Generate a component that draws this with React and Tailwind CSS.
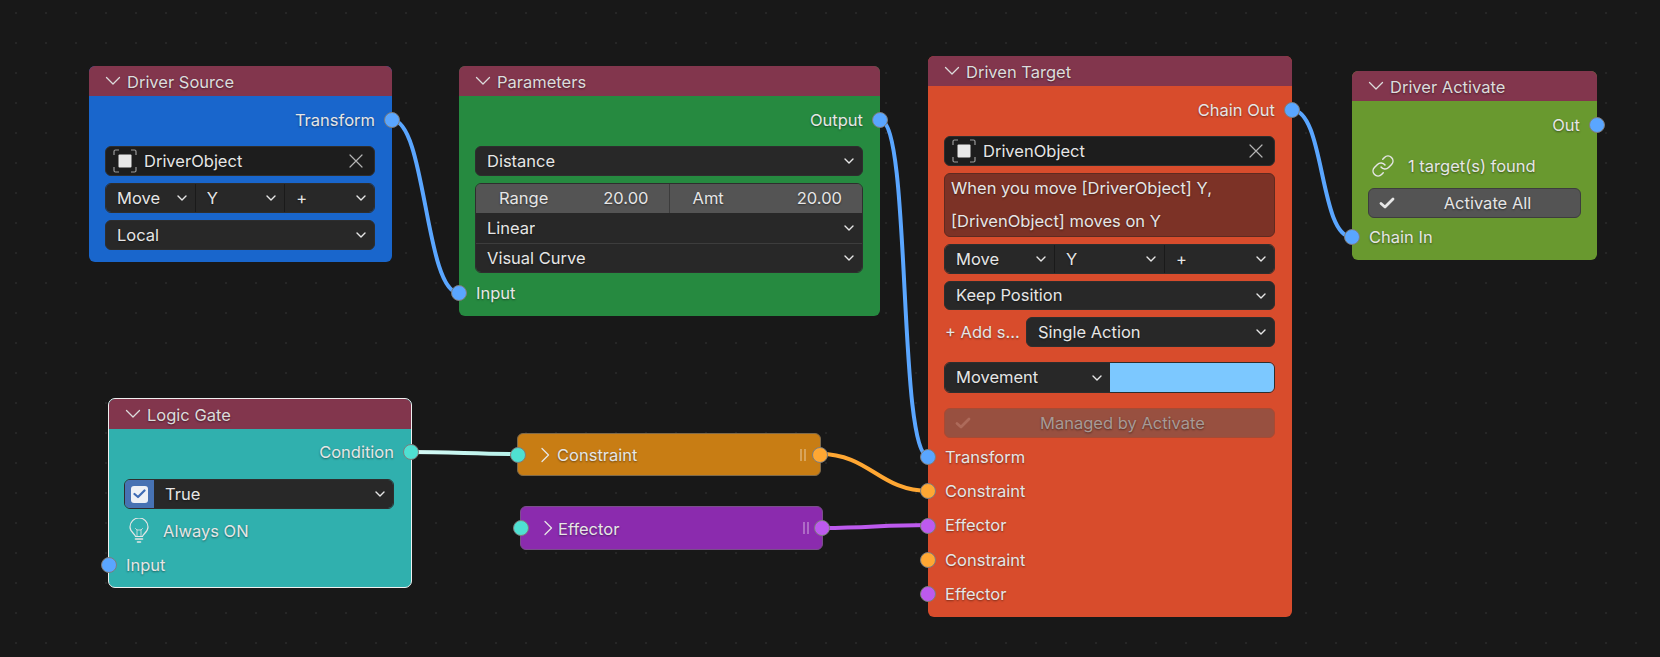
import { Link } from "lucide-react";

const FONT = "font-['Inter','Noto_Sans',sans-serif]";
const BOXED = "rounded-[6px] border border-[#2e2e2e]";

// Collapse arrow in node headers
function HeaderArrow({ open = true }) {
  return (
    <svg width="16" height="16" viewBox="0 0 16 16" fill="none" stroke="currentColor" strokeWidth="1.3" strokeLinecap="round" strokeLinejoin="round" className="shrink-0">
      {open ? <path d="M1.5 4.5l6.5 6.5 6.5-6.5" /> : <path d="M5 1.5l6.5 6.5-6.5 6.5" />}
    </svg>
  );
}

function Chevron() {
  return (
    <svg width="10" height="10" viewBox="0 0 10 10" fill="none" stroke="#e6e6e6" strokeWidth="1.4" strokeLinecap="round" strokeLinejoin="round" className="shrink-0">
      <path d="M1 3l4 4 4-4" />
    </svg>
  );
}

function ObjectIcon() {
  return (
    <svg width="24" height="24" viewBox="0 0 24 24" fill="none" className="shrink-0">
      <path d="M1 6V2.5A1.5 1.5 0 0 1 2.5 1H6M18 1h3.5A1.5 1.5 0 0 1 23 2.5V6M23 18v3.5a1.5 1.5 0 0 1-1.5 1.5H18M6 23H2.5A1.5 1.5 0 0 1 1 21.5V18" stroke="#9a9a9a" strokeWidth="1.2" />
      <rect x="5.5" y="5.5" width="13" height="13" rx="1" fill="#e8e8e8" />
    </svg>
  );
}

function CrossIcon() {
  return (
    <svg width="14" height="14" viewBox="0 0 14 14" stroke="#b4b4b4" strokeWidth="1.2" strokeLinecap="round" className="shrink-0">
      <path d="M1 1l12 12M13 1L1 13" />
    </svg>
  );
}

function BulbIcon() {
  return (
    <svg width="24" height="26" viewBox="0 0 24 26" fill="none" stroke="#e6e6e6" strokeWidth="1.2" strokeLinecap="round" strokeLinejoin="round" className="shrink-0">
      <path d="M8.5 18.5c-.3-2.6-5.5-4.4-5.5-9.5a9 9 0 0 1 18 0c0 5.1-5.2 6.9-5.5 9.5z" />
      <path d="M8.5 10.5l1.5 1.5h4l1.5-1.5M10 12v6M14 12v6" strokeWidth="0.8" />
      <path d="M8.5 21h7" strokeWidth="1.6" />
      <path d="M10.5 24h3" strokeWidth="1.6" />
    </svg>
  );
}

function Tick({ color = "#e6e6e6" }) {
  return (
    <svg width="16" height="12" viewBox="0 0 16 12" fill="none" stroke={color} strokeWidth="2.8" strokeLinecap="round" strokeLinejoin="round" className="shrink-0">
      <path d="M2 6.5l4 3.5 8-8" />
    </svg>
  );
}

function Grip() {
  return (
    <div className="flex gap-[2px] shrink-0">
      <span className="w-[2px] h-[12px] bg-white/30" />
      <span className="w-[2px] h-[12px] bg-white/30" />
    </div>
  );
}

function Socket({ color, side }) {
  return (
    <span
      className={`absolute top-1/2 -translate-y-1/2 w-[16px] h-[16px] rounded-full border border-[#7d7d7d] z-10 ${side === "left" ? "left-[-8px]" : "right-[-8px]"}`}
      style={{ backgroundColor: color }}
    />
  );
}

// A row holding a socket on the node edge and its label
function SocketRow({ label, color, side = "left", height = "h-[34px]" }) {
  return (
    <div className={`relative flex items-center px-[17px] ${height} ${side === "right" ? "justify-end" : ""}`}>
      <Socket color={color} side={side} />
      <span>{label}</span>
    </div>
  );
}

function Dropdown({ label, height = "h-[30px]", className = "" }) {
  return (
    <div className={`flex items-center justify-between pl-[11px] pr-[8px] bg-[#282828] ${height} ${className}`}>
      <span className="truncate">{label}</span>
      <Chevron />
    </div>
  );
}

function ObjectField({ name }) {
  return (
    <div className="flex items-center gap-[7px] h-[30px] pl-[7px] pr-[11px] rounded-[6px] bg-[#1d1d1d] border border-[#2e2e2e]">
      <ObjectIcon />
      <span className="flex-1">{name}</span>
      <CrossIcon />
    </div>
  );
}

function TripleRow() {
  return (
    <div className={`flex overflow-hidden ${BOXED}`}>
      <Dropdown label="Move" height="h-[28px]" className="flex-1" />
      <Dropdown label="Y" height="h-[28px]" className="flex-1 border-l border-[#1a1a1a]" />
      <Dropdown label="+" height="h-[28px]" className="flex-1 border-l border-[#1a1a1a]" />
    </div>
  );
}

function NodeHeader({ title }) {
  return (
    <div className="flex items-center gap-[6px] h-[30px] pl-[16px] bg-[#82364d] rounded-t-[6px] text-[#dcdcdc]">
      <HeaderArrow />
      <span className="pt-[2px]">{title}</span>
    </div>
  );
}

function Wires() {
  return (
    <svg width="1660" height="657" viewBox="0 0 1660 657" fill="none" className="absolute left-0 top-0">
      <defs>
        <linearGradient id="condition" x1="411" x2="518" y1="0" y2="0" gradientUnits="userSpaceOnUse">
          <stop offset="0" stopColor="#d6faf6" />
          <stop offset="1" stopColor="#b6f2ea" />
        </linearGradient>
      </defs>
      <g strokeWidth="4" strokeLinecap="round">
        <path d="M392 120C426 120 425 293 459 293" stroke="#5aa6ff" />
        <path d="M880 120C912 120 897 457 929 457" stroke="#5aa6ff" />
        <path d="M1292 110C1325 110 1319 237 1352 237" stroke="#5aa6ff" />
        <path d="M411 452C450 452 478 454 518 454" stroke="url(#condition)" />
        <path d="M820 454C870 454 879 491 929 491" stroke="#ffa733" />
        <path d="M823 528C870 528 880 525 929 525" stroke="#bd5aee" />
      </g>
    </svg>
  );
}

export default function App() {
  return (
    <div className={`relative w-[1660px] h-[657px] overflow-hidden bg-[#181818] bg-[radial-gradient(circle,#262626_1px,transparent_1.2px)] bg-[size:30px_30px] bg-[position:1px_-2px] text-[16.5px] text-[#e6e6e6] [text-shadow:0_1px_2px_rgba(0,0,0,0.45)] ${FONT}`}>
      <Wires />

      {/* Driver Source */}
      <div className="absolute left-[89px] top-[66px] w-[303px] h-[196px] rounded-[6px] bg-[#1966cc]">
        <NodeHeader title="Driver Source" />
        <div className="pt-[7px]">
          <SocketRow label="Transform" color="#5aa6ff" side="right" />
          <div className="flex flex-col gap-[7px] pt-[9px] pl-[16px] pr-[17px]">
            <ObjectField name="DriverObject" />
            <TripleRow />
            <Dropdown label="Local" className={BOXED} />
          </div>
        </div>
      </div>

      {/* Parameters */}
      <div className="absolute left-[459px] top-[66px] w-[421px] h-[250px] rounded-[6px] bg-[#268a40]">
        <NodeHeader title="Parameters" />
        <div className="pt-[7px]">
          <SocketRow label="Output" color="#5aa6ff" side="right" />
          <div className="flex flex-col gap-[7px] pt-[9px] pb-[3px] pl-[16px] pr-[17px]">
            <Dropdown label="Distance" className={BOXED} />
            <div className={`overflow-hidden ${BOXED}`}>
              <div className="flex h-[29px] bg-[#545454]">
                <div className="flex items-center justify-between flex-1 pl-[23px] pr-[20px]">
                  <span>Range</span>
                  <span>20.00</span>
                </div>
                <div className="flex items-center justify-between flex-1 pl-[23px] pr-[20px] border-l border-[#3c3c3c]">
                  <span>Amt</span>
                  <span>20.00</span>
                </div>
              </div>
              <Dropdown label="Linear" />
              <Dropdown label="Visual Curve" height="h-[29px]" className="border-t border-[#3d3d3d]" />
            </div>
          </div>
          <SocketRow label="Input" color="#5aa6ff" />
        </div>
      </div>

      {/* Driven Target */}
      <div className="absolute left-[928px] top-[56px] w-[364px] h-[561px] rounded-[6px] bg-[#d84c2c]">
        <NodeHeader title="Driven Target" />
        <div className="pt-[7px]">
          <SocketRow label="Chain Out" color="#5aa6ff" side="right" />
          <div className="flex flex-col gap-[7px] pt-[9px] pl-[16px] pr-[17px]">
            <ObjectField name="DrivenObject" />
            <div className="flex flex-col justify-center h-[64px] px-[6px] leading-[33px] rounded-[6px] bg-[#7c3226] border border-[#5f2a20]">
              <span>When you move [DriverObject] Y,</span>
              <span>[DrivenObject] moves on Y</span>
            </div>
            <TripleRow />
            <Dropdown label="Keep Position" height="h-[29px]" className={BOXED} />
            <div className="flex items-center">
              <span className="w-[82px] pl-[1px] shrink-0">+ Add s...</span>
              <Dropdown label="Single Action" className={`flex-1 ${BOXED}`} />
            </div>
          </div>
          <div className="flex flex-col gap-[15px] pt-[15px] pb-[2px] pl-[16px] pr-[17px]">
            <div className={`flex h-[31px] overflow-hidden ${BOXED}`}>
              <Dropdown label="Movement" height="h-full" className="w-[165px]" />
              <div className="flex-1 bg-[#7cc8ff]" />
            </div>
            <div className="flex items-center h-[30px] pl-[10px] rounded-[6px] bg-[#985040] border border-[#a84a33] text-[#a89a96]">
              <Tick color="#ad6a5a" />
              <span className="flex-1 text-center">Managed by Activate</span>
            </div>
          </div>
          <SocketRow label="Transform" color="#5aa6ff" height="h-[34.25px]" />
          <SocketRow label="Constraint" color="#ffa733" height="h-[34.25px]" />
          <SocketRow label="Effector" color="#bd5aee" height="h-[34.25px]" />
          <SocketRow label="Constraint" color="#ffa733" height="h-[34.25px]" />
          <SocketRow label="Effector" color="#bd5aee" height="h-[34.25px]" />
        </div>
      </div>

      {/* Driver Activate */}
      <div className="absolute left-[1352px] top-[71px] w-[245px] h-[189px] rounded-[6px] bg-[#69992f]">
        <NodeHeader title="Driver Activate" />
        <div className="pt-[7px]">
          <SocketRow label="Out" color="#5aa6ff" side="right" />
          <div className="flex flex-col gap-[7px] pt-[9px] pb-[2px] px-[16px]">
            <div className="flex items-center gap-[13px] h-[30px] pl-[3px]">
              <Link size={24} strokeWidth={1.5} className="shrink-0" />
              <span>1 target(s) found</span>
            </div>
            <div className="flex items-center h-[30px] pl-[10px] rounded-[6px] bg-[#545454] border border-[#3d3d3d]">
              <Tick />
              <span className="flex-1 text-center">Activate All</span>
            </div>
          </div>
          <SocketRow label="Chain In" color="#5aa6ff" />
        </div>
      </div>

      {/* Logic Gate */}
      <div className="absolute left-[108px] top-[398px] w-[304px] h-[190px] rounded-[7px] bg-[#30b0ae] border border-[#f0f0f0]">
        <NodeHeader title="Logic Gate" />
        <div className="pt-[6px]">
          <SocketRow label="Condition" color="#4fe0d2" side="right" />
          <div className="flex flex-col gap-[7px] pt-[10px] pb-[2px] pl-[15px] pr-[17px]">
            <div className={`flex h-[30px] overflow-hidden ${BOXED}`}>
              <div className="flex items-center justify-center w-[29px] bg-[#4772b3]">
                <div className="flex items-center justify-center w-[17px] h-[17px] rounded-[3px] bg-[#eef1f6]">
                  <svg width="13" height="10" viewBox="0 0 13 10" fill="none" stroke="#3f6cb5" strokeWidth="2.2" strokeLinecap="round" strokeLinejoin="round">
                    <path d="M1.5 5l3.5 3 6.5-6.5" />
                  </svg>
                </div>
              </div>
              <Dropdown label="True" height="h-full" className="flex-1" />
            </div>
            <div className="flex items-center gap-[12px] h-[30px] pl-[3px]">
              <BulbIcon />
              <span>Always ON</span>
            </div>
          </div>
          <SocketRow label="Input" color="#5aa6ff" />
        </div>
      </div>

      {/* Constraint, collapsed */}
      <div className="absolute left-[517px] top-[433px] w-[304px] h-[43px] flex items-center gap-[4px] pl-[19px] pr-[14px] rounded-[6px] bg-[#c87d14] border border-[#7f6a4a]">
        <Socket color="#4fe0d2" side="left" />
        <HeaderArrow open={false} />
        <span className="pt-[2px] flex-1">Constraint</span>
        <Grip />
        <Socket color="#ffa733" side="right" />
      </div>

      {/* Effector, collapsed */}
      <div className="absolute left-[520px] top-[506px] w-[303px] h-[44px] flex items-center gap-[2px] pl-[19px] pr-[13px] rounded-[6px] bg-[#8b2bae] border border-[#7a4f8a]">
        <Socket color="#4fe0d2" side="left" />
        <HeaderArrow open={false} />
        <span className="pt-[2px] flex-1">Effector</span>
        <Grip />
        <Socket color="#bd5aee" side="right" />
      </div>
    </div>
  );
}
